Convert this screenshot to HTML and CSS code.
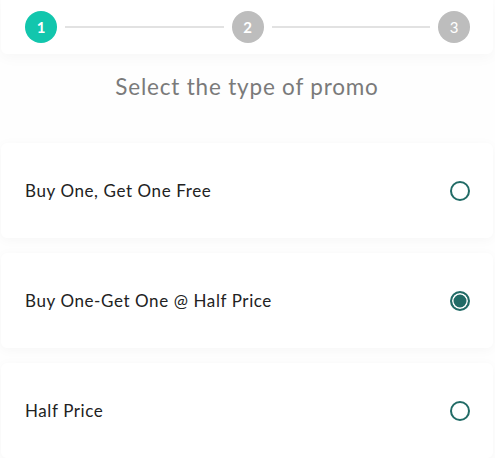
FILE: index.html
```html
<!DOCTYPE html>
<html lang="en">
<head>
<meta charset="utf-8">
<title>Select promo</title>
<link rel="stylesheet" href="styles.css">
</head>
<body>
<div class="page">
  <div class="stepper">
    <div class="step step-active">1</div>
    <div class="step-line"></div>
    <div class="step">2</div>
    <div class="step-line"></div>
    <div class="step">3</div>
  </div>
  <h1 class="title">Select the type of promo</h1>
  <div class="options">
    <label class="option">
      <span class="option-text">Buy One, Get One Free</span>
      <span class="radio"></span>
    </label>
    <label class="option">
      <span class="option-text">Buy One-Get One @ Half Price</span>
      <span class="radio radio-checked"></span>
    </label>
    <label class="option">
      <span class="option-text">Half Price</span>
      <span class="radio"></span>
    </label>
  </div>
</div>
</body>
</html>
```

FILE: styles.css
```css
html, body {
  margin: 0;
  padding: 0;
  background: #fefefe;
  font-family: Lato, "Open Sans", sans-serif;
}
.page {
  padding: 0 2px 0 1px;
  overflow: hidden;
  height: 458px;
}
.stepper {
  display: flex;
  align-items: center;
  height: 54px;
  box-sizing: border-box;
  padding: 0 23px 0 24px;
  background: #fff;
  border-radius: 0 0 6px 6px;
  box-shadow: 0 4px 14px rgba(0, 0, 0, 0.03);
}
.step {
  width: 32px;
  height: 32px;
  border-radius: 50%;
  background: #bdbdbd;
  color: #fff;
  font-size: 15px;
  font-weight: 700;
  display: flex;
  align-items: center;
  justify-content: center;
  flex: none;
}
.step:last-child {
  font-weight: 400;
}
.step-active {
  background: #12c6ad;
}
.step-line {
  flex: 1;
  height: 2px;
  background: #e2e2e2;
  margin: 0 8px;
}
.title {
  margin: 18px 0 0;
  height: 71px;
  text-align: center;
  font-size: 22.5px;
  font-weight: 400;
  color: #7a7a7a;
  line-height: 30px;
  letter-spacing: 0.8px;
}
.options {
  display: flex;
  flex-direction: column;
  gap: 15px;
}
.option {
  display: flex;
  align-items: center;
  justify-content: space-between;
  height: 95px;
  flex: none;
  box-sizing: border-box;
  padding: 0 23px 0 24px;
  background: #fff;
  border-radius: 6px;
  box-shadow: 0 2px 12px rgba(0, 0, 0, 0.035);
}
.option-text {
  font-size: 17px;
  color: #222;
  letter-spacing: 0.6px;
}
.radio {
  width: 20px;
  height: 20px;
  box-sizing: border-box;
  border-radius: 50%;
  border: 2px solid #216b66;
  flex: none;
}
.radio-checked {
  background: #216b66;
  box-shadow: inset 0 0 0 1.5px #fff;
}
```
